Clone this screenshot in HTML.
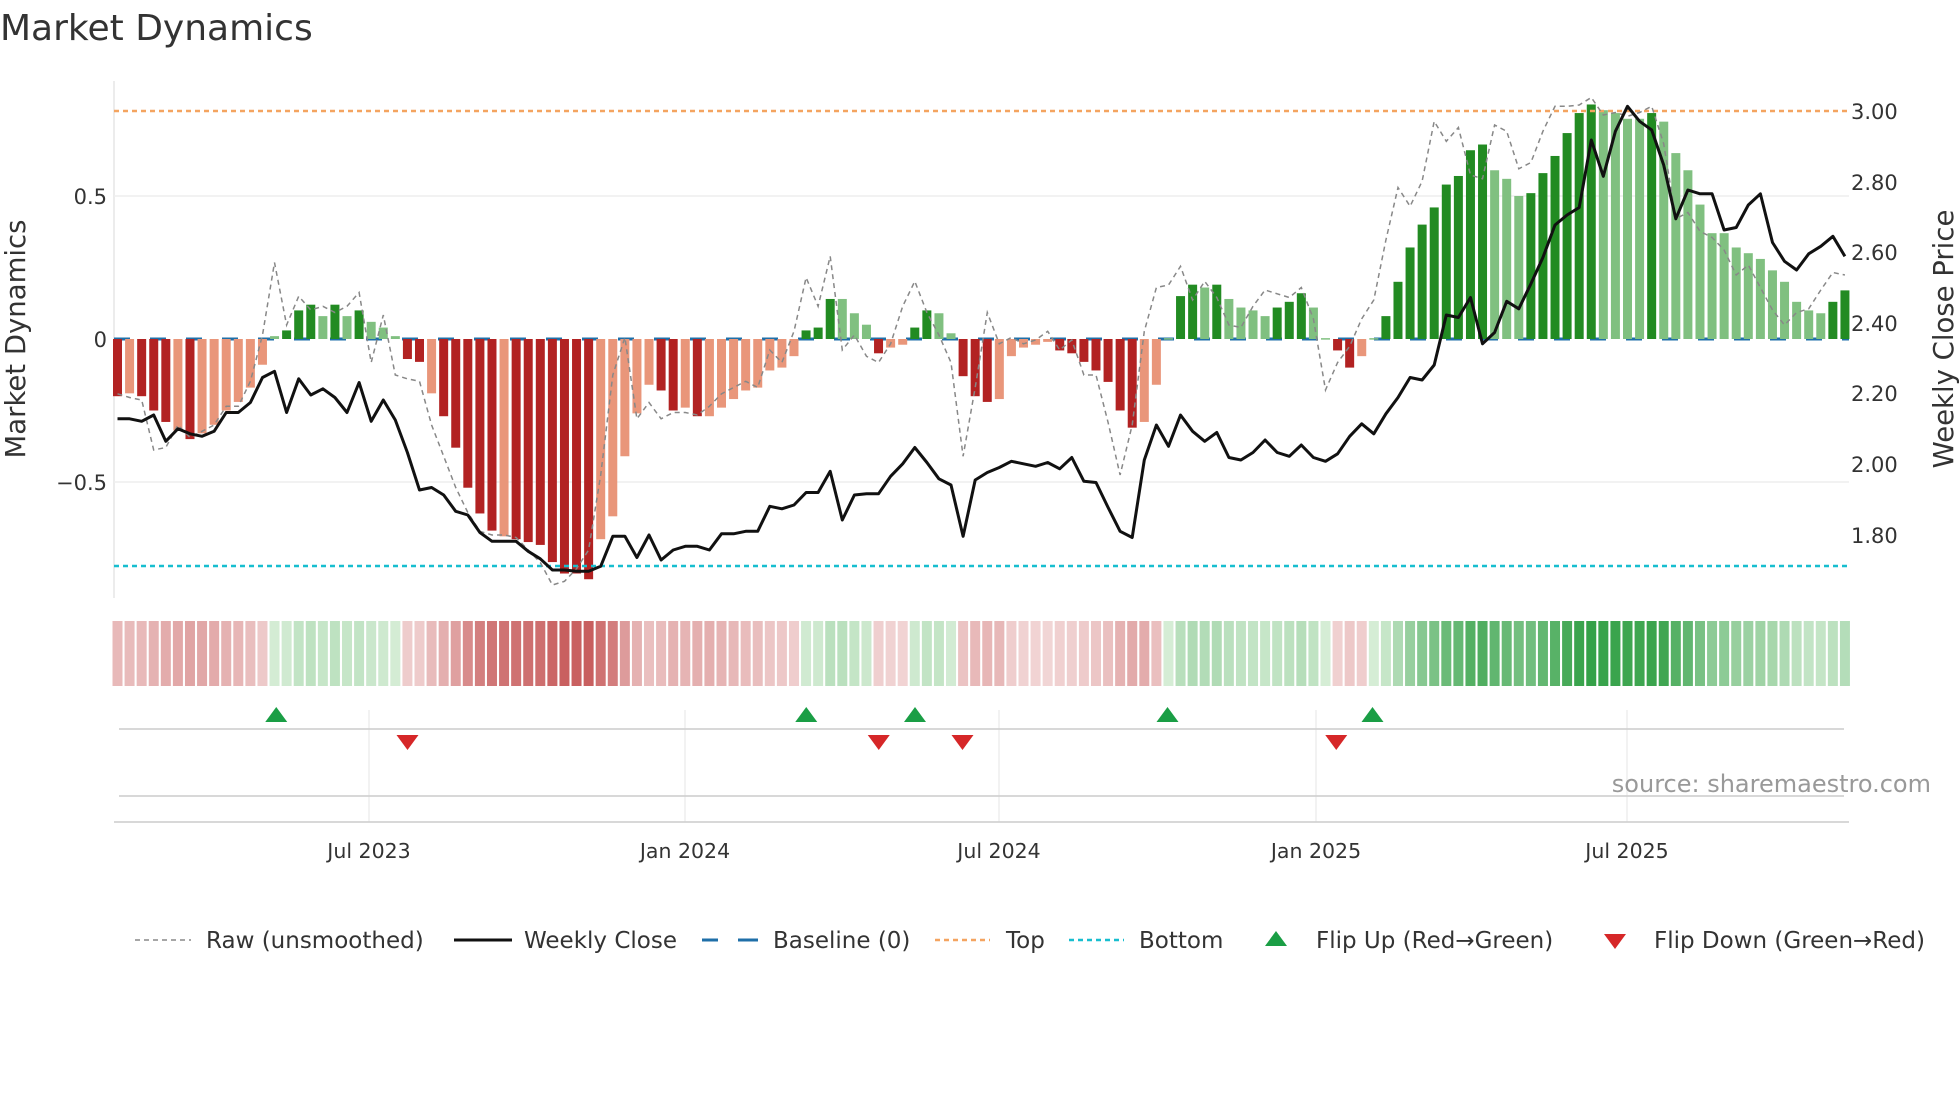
<!DOCTYPE html>
<html><head><meta charset="utf-8"><style>
html,body{margin:0;padding:0;background:#fff;}
svg{display:block;font-family:"DejaVu Sans","Liberation Sans",sans-serif;}
</style></head><body>
<svg id="s" width="1960" height="1102" viewBox="0 0 1960 1102" xmlns="http://www.w3.org/2000/svg">
<text x="0" y="40" font-size="36" fill="#333">Market Dynamics</text>
<line x1="114" y1="81" x2="114" y2="598" stroke="#e6e6e6" stroke-width="1.5"/>
<line x1="114" y1="196" x2="1849" y2="196" stroke="#eee" stroke-width="1.5"/>
<line x1="114" y1="482" x2="1849" y2="482" stroke="#eee" stroke-width="1.5"/>
<g font-size="21" fill="#333" text-anchor="end">
<text x="107" y="204">0.5</text><text x="107" y="347">0</text><text x="107" y="490">−0.5</text>
</g>
<g font-size="21" fill="#333">
<text x="1851" y="119">3.00</text><text x="1851" y="190">2.80</text><text x="1851" y="260">2.60</text><text x="1851" y="331">2.40</text><text x="1851" y="401">2.20</text><text x="1851" y="472">2.00</text><text x="1851" y="543">1.80</text>
</g>
<text transform="translate(25,339) rotate(-90)" font-size="27.5" fill="#333" text-anchor="middle">Market Dynamics</text>
<text transform="translate(1953,339) rotate(-90)" font-size="27.5" fill="#333" text-anchor="middle">Weekly Close Price</text>
<line x1="114" y1="339" x2="1849" y2="339" stroke="#1f6fa8" stroke-width="3" stroke-dasharray="16,20"/>
<g id="bars"></g>
<line x1="114" y1="111" x2="1849" y2="111" stroke="#f4a460" stroke-width="2.5" stroke-dasharray="5,4"/>
<line x1="114" y1="566" x2="1849" y2="566" stroke="#17becf" stroke-width="2.5" stroke-dasharray="5,4"/>
<polyline id="raw" fill="none" stroke="#888" stroke-width="1.5" stroke-dasharray="5,4"/>
<polyline id="px" fill="none" stroke="#111" stroke-width="3" stroke-linejoin="round"/>
<g id="heat"></g>
<g stroke="#eee" stroke-width="1.5">
<line x1="369" y1="710" x2="369" y2="822"/><line x1="685" y1="710" x2="685" y2="822"/><line x1="999" y1="710" x2="999" y2="822"/><line x1="1316" y1="710" x2="1316" y2="822"/><line x1="1627" y1="710" x2="1627" y2="822"/>
</g>
<line x1="119" y1="729" x2="1844" y2="729" stroke="#ccc" stroke-width="1.5"/>
<line x1="119" y1="796" x2="1844" y2="796" stroke="#ccc" stroke-width="1.5"/>
<line x1="114" y1="822" x2="1849" y2="822" stroke="#ccc" stroke-width="1.5"/>
<g id="flips"></g>
<text x="1931" y="792" font-size="24" fill="#999" text-anchor="end">source: sharemaestro.com</text>
<g font-size="20.5" fill="#333" text-anchor="middle">
<text x="369" y="858">Jul 2023</text><text x="685" y="858">Jan 2024</text><text x="999" y="858">Jul 2024</text><text x="1316" y="858">Jan 2025</text><text x="1627" y="858">Jul 2025</text>
</g>
<g font-size="23" fill="#333">
<line x1="135" y1="940" x2="191" y2="940" stroke="#888" stroke-width="1.5" stroke-dasharray="5,4"/>
<text x="206" y="948">Raw (unsmoothed)</text>
<line x1="454" y1="940" x2="512" y2="940" stroke="#111" stroke-width="3"/>
<text x="524" y="948">Weekly Close</text>
<line x1="702" y1="940" x2="758" y2="940" stroke="#1f6fa8" stroke-width="3" stroke-dasharray="16,20"/>
<line x1="740" y1="940" x2="758" y2="940" stroke="#1f6fa8" stroke-width="3"/>
<text x="773" y="948">Baseline (0)</text>
<line x1="935" y1="940" x2="990" y2="940" stroke="#f4a460" stroke-width="2.5" stroke-dasharray="5,4"/>
<text x="1006" y="948">Top</text>
<line x1="1069" y1="940" x2="1124" y2="940" stroke="#17becf" stroke-width="2.5" stroke-dasharray="5,4"/>
<text x="1139" y="948">Bottom</text>
<polygon points="1276,931 1265,946 1287,946" fill="#1a9e45"/>
<text x="1316" y="948">Flip Up (Red→Green)</text>
<polygon points="1604,934 1626,934 1615,949" fill="#d62728"/>
<text x="1654" y="948">Flip Down (Green→Red)</text>
</g>
</svg>
<script>
var NS="http://www.w3.org/2000/svg";
function el(t,a,p){var e=document.createElementNS(NS,t);for(var k in a)e.setAttribute(k,a[k]);p.appendChild(e);return e;}
var V=[-.20,1,-.19,0,-.20,1,-.25,1,-.29,1,-.32,0,-.35,1,-.33,0,-.30,0,-.25,0,-.22,0,-.17,0,-.09,0,.01,0,.03,1,.10,1,.12,1,.08,0,.12,1,.08,0,.10,1,.06,0,.04,0,.01,0,
-.07,1,-.08,1,-.19,0,-.27,1,-.38,1,-.52,1,-.61,1,-.67,1,-.69,0,-.70,1,-.71,1,-.72,1,-.78,1,-.82,1,-.82,1,-.84,1,-.70,0,-.62,0,-.41,0,-.26,0,-.16,0,-.18,1,-.25,1,-.24,0,-.27,1,-.27,0,-.24,0,-.21,0,-.18,0,-.17,0,-.11,0,-.10,0,-.06,0,
.03,1,.04,1,.14,1,.14,0,.09,0,.05,0,-.05,1,-.03,0,-.02,0,.04,1,.10,1,.09,0,.02,0,-.13,1,-.20,1,-.22,1,-.21,0,-.06,0,-.03,0,-.02,0,-.01,0,-.04,1,-.05,1,-.08,1,-.11,1,-.15,1,-.25,1,-.31,1,-.29,0,-.16,0,.003,0,
.15,1,.19,1,.18,0,.19,1,.14,0,.11,0,.10,0,.08,0,.11,1,.13,1,.16,1,.11,0,.003,0,-.04,1,-.10,1,-.06,0,.003,0,.08,1,.20,1,.32,1,.40,1,.46,1,.54,1,.57,1,.66,1,.68,1,.59,0,.56,0,.50,0,.51,1,.58,1,.64,1,.72,1,.79,1,.82,1,.80,0,.79,0,.77,0,.77,0,.79,1,
.76,0,.65,0,.59,0,.47,0,.37,0,.37,0,.32,0,.30,0,.28,0,.24,0,.20,0,.13,0,.10,0,.09,0,.13,1,.17,1];
var P=[335,335,337,332,353,343,347,349,345,330,330,322,302,297,330,303,316,311,318,330,306,337,320,336,362,392,390,396,409,412,426,433,433,433,441,447,456,456,457,457,453,429,429,446,428,448,440,437,437,440,427,427,425,425,405,407,404,394,394,377,416,396,395,395,381,371,358,370,383,388,429,384,378,374,369,371,373,370,375,366,385,386,406,425,430,368,340,357,332,345,353,346,366,368,362,352,362,365,356,366,369,363,349,339,347,331,318,302,304,292,252,254,238,275,266,241,247,227,206,180,172,166,112,141,105,85,97,104,132,175,152,155,155,184,182,164,155,194,209,216,203,197,189,205];
var R=[315,318,320,360,358,340,350,345,340,325,325,305,268,210,260,237,248,245,250,245,234,290,252,300,303,305,340,365,390,410,425,428,428,430,440,450,468,465,455,440,380,300,270,335,322,335,330,330,332,325,315,310,305,310,280,290,265,222,245,205,280,268,285,290,275,245,225,250,268,290,365,310,250,275,270,275,272,265,280,272,300,300,338,380,340,265,230,228,213,240,225,238,260,262,245,232,235,238,230,255,312,290,277,255,240,192,150,165,145,97,113,102,140,143,100,105,135,130,105,85,85,84,78,92,90,93,90,85,115,175,170,185,190,200,220,212,230,248,260,250,247,232,218,220];
var bars=document.getElementById('bars'),heat=document.getElementById('heat');
var n=V.length/2,x0=117.5,dx=12.08,Z=339,S=286;
for(var i=0;i<n;i++){var v=V[2*i],d=V[2*i+1],cx=x0+i*dx;
 var c=v<0?(d?'#b22222':'#e9967a'):(d?'#228b22':'#80c080');
 var h=Math.abs(v)*S;el('rect',{x:cx-4.5,y:v<0?Z:Z-h,width:9,height:Math.max(h,1.5),fill:c},bars);
 var t=Math.min(Math.abs(v)/0.83,1),col;
 if(v<0){col='rgb('+Math.round(242-42*t)+','+Math.round(214-119*t)+','+Math.round(214-119*t)+')';}
 else{col='rgb('+Math.round(214-164*t)+','+Math.round(237-77*t)+','+Math.round(214-144*t)+')';}
 el('rect',{x:cx-5,y:621,width:10,height:65,fill:col},heat);}
var pp=[],rp=[];for(var i=0;i<n;i++){var cx=x0+i*dx;pp.push(cx.toFixed(1)+','+(P[i]*1.25).toFixed(1));rp.push(cx.toFixed(1)+','+(R[i]*1.25).toFixed(1));}
document.getElementById('px').setAttribute('points',pp.join(' '));
document.getElementById('raw').setAttribute('points',rp.join(' '));
var f=document.getElementById('flips');
[221,645,732,934,1098].forEach(function(x){x*=1.25;el('polygon',{points:(x)+',707 '+(x-11)+',722 '+(x+11)+',722',fill:'#1a9e45'},f);});
[326,703,770,1069].forEach(function(x){x*=1.25;el('polygon',{points:(x-11)+',735 '+(x+11)+',735 '+x+',750',fill:'#d62728'},f);});
</script>
</body></html>
